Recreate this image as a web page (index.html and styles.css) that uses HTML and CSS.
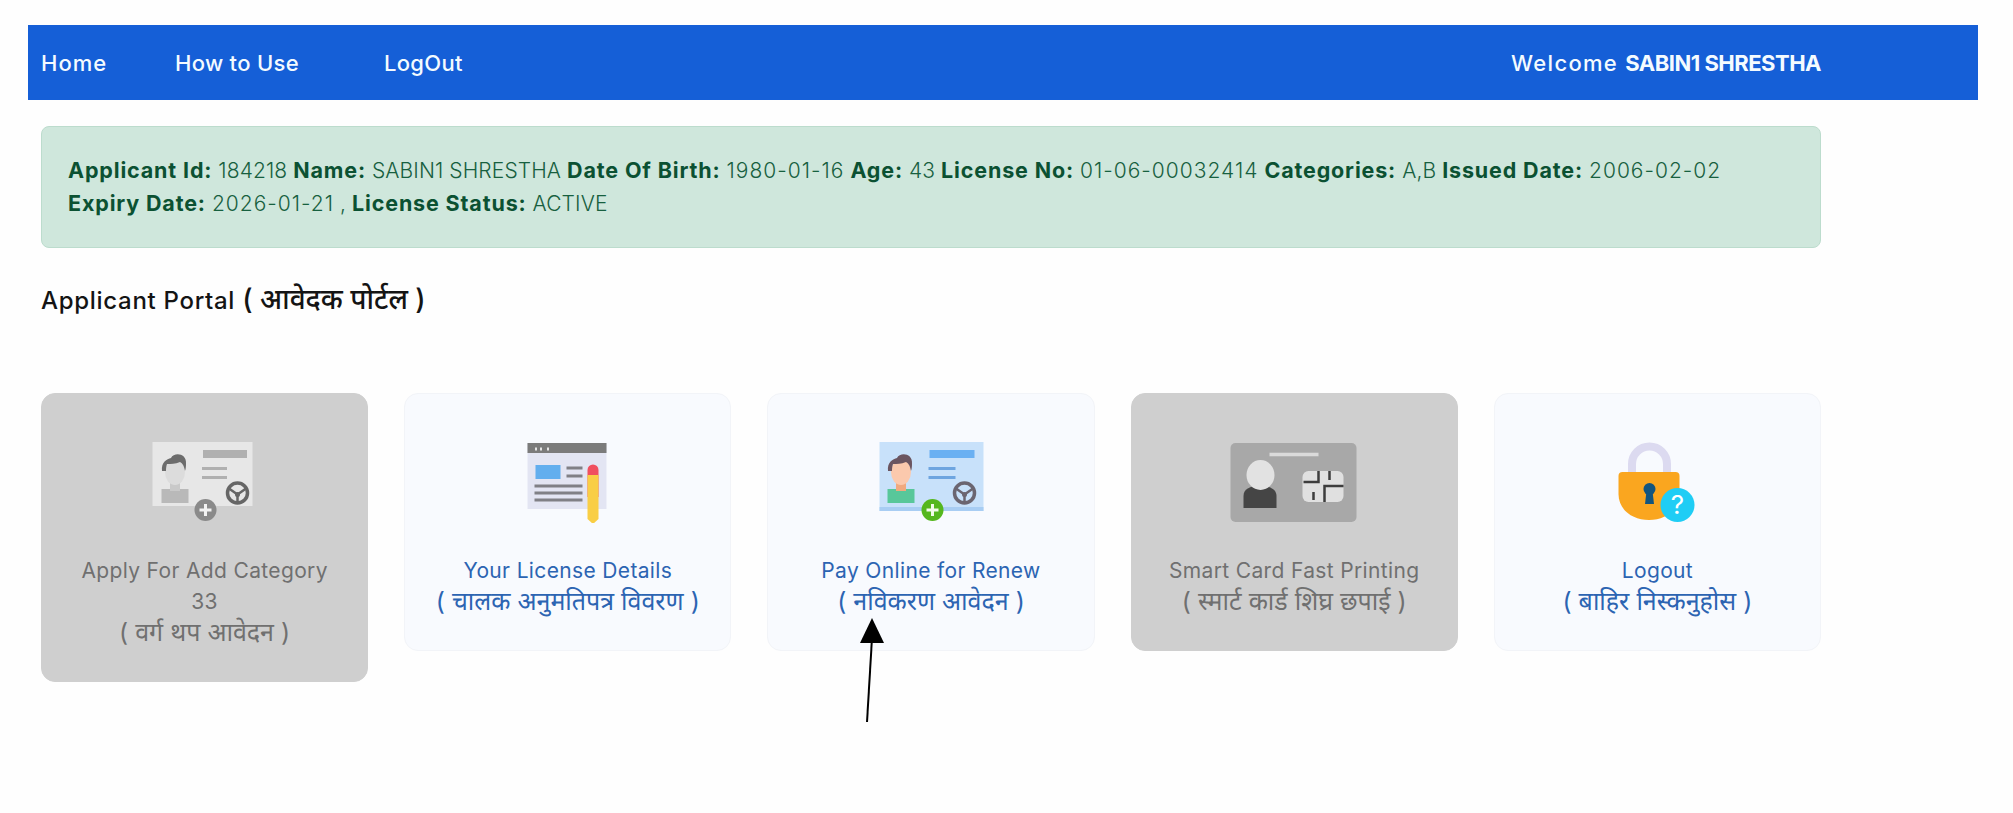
FILE: index.html
```html
<!DOCTYPE html>
<html lang="en">
<head>
<meta charset="utf-8">
<title>Applicant Portal</title>
<link rel="stylesheet" href="styles.css">
</head>
<body>
<div class="page">
  <nav class="nav">
    <div class="nav-links">
      <a class="nav-link nav-home">Home</a>
      <a class="nav-link nav-how">How to Use</a>
      <a class="nav-link">LogOut</a>
    </div>
    <div class="welcome">Welcome <b>SABIN1 SHRESTHA</b></div>
  </nav>
  <main class="content">
    <div class="alert">
      <b>Applicant Id:</b> 184218 <b>Name:</b> SABIN1 SHRESTHA <b>Date Of Birth:</b> <span class="num">1980-01-16</span> <b>Age:</b> 43 <b>License No:</b> <span class="num">01-06-00032414</span> <b>Categories:</b> A,B <b>Issued Date:</b> <span class="num">2006-02-02</span><br>
      <b>Expiry Date:</b> <span class="num">2026-01-21</span> , <b>License Status:</b> ACTIVE
    </div>
    <h1 class="title">Applicant Portal <span class="hi">( आवेदक पोर्टल )</span></h1>
    <div class="cards">
      <a class="card card-off">
        <svg class="icon" viewBox="0 0 130 84" width="130" height="84">
          <g transform="translate(10 0)">
            <rect x="2.500" y="3" width="100" height="64" fill="#e7e7e7"/>
            <rect x="53" y="11" width="44" height="8" fill="#b0b0b0"/>
            <path d="M52 29.500h25M52 38.500h25" stroke="#b0b0b0" stroke-width="3"/>
            <rect x="11.500" y="50" width="27" height="14" fill="#b9b9b9"/>
            <rect x="20" y="40" width="10" height="12" fill="#c9c9c9"/>
            <ellipse cx="25" cy="33" rx="10" ry="13" fill="#dcdcdc"/>
            <path d="M12 32c-1-9 5-12 9-13 3-6 16-5 15 6 0 5-1 7-1 7-1-6-3-8-5-9-5 2-9 2-13 2-1 3-1 5-1 7z" fill="#6c6c6c"/>
            <circle cx="87.500" cy="54" r="10" fill="none" stroke="#666" stroke-width="3.500"/>
            <path d="M79 49.500l8.500 6 8.500-6M87.500 55v8" fill="none" stroke="#666" stroke-width="2.500"/>
            <circle cx="87.500" cy="55.500" r="2.500" fill="#666"/>
            <circle cx="55.500" cy="71" r="11" fill="#8a8a8a"/>
            <path d="M55.500 65v12M49.500 71h12" stroke="#f2f2f2" stroke-width="3"/>
          </g>
        </svg>
        <span class="label">Apply For Add Category</span>
        <span class="label">33</span>
        <span class="label hi">( वर्ग थप आवेदन )</span>
      </a>
      <a class="card">
        <svg class="icon" viewBox="0 0 130 84" width="130" height="84">
          <g transform="translate(10 0)">
            <rect x="14.500" y="4" width="79" height="66" fill="#e3e5f3"/>
            <rect x="14.500" y="4" width="79" height="10" fill="#7b7b7b"/>
            <path d="M22 10h2M27 10h2M34 10h2" stroke="#e6e6e6" stroke-width="3"/>
            <rect x="22.500" y="26" width="25" height="14" fill="#62aeee"/>
            <path d="M53.500 29h16M53.500 37h16M21.500 47h48M21.500 54h48M21.500 61h48" stroke="#808086" stroke-width="3"/>
            <path d="M74.500 58v-27a5.500 5.500 0 0 1 11 0v27z" fill="#f04f5f"/>
            <path d="M74.500 36h11v44l-5.500 5-5.500-5z" fill="#f9ce45"/>
          </g>
        </svg>
        <span class="label">Your License Details</span>
        <span class="label hi">( चालक अनुमतिपत्र विवरण )</span>
      </a>
      <a class="card">
        <svg class="icon" viewBox="0 0 130 84" width="130" height="84">
          <g transform="translate(10 0)">
            <rect x="3.500" y="3" width="104" height="69" fill="#c8e1fa"/>
            <rect x="3.500" y="68" width="104" height="4" fill="#a8cdf3"/>
            <rect x="53.500" y="11" width="45" height="8" fill="#6ab0f2"/>
            <path d="M52.500 29.500h27M52.500 38.500h27" stroke="#6ea5e0" stroke-width="3"/>
            <rect x="11.500" y="50" width="27" height="14" fill="#58c79a"/>
            <rect x="20" y="40" width="10" height="12" fill="#f0a97f"/>
            <ellipse cx="25" cy="33" rx="10" ry="13" fill="#fbc9ad"/>
            <path d="M12 32c-1-9 5-12 9-13 3-6 16-5 15 6 0 5-1 7-1 7-1-6-3-8-5-9-5 2-9 2-13 2-1 3-1 5-1 7z" fill="#6b5560"/>
            <circle cx="88.500" cy="54" r="10" fill="none" stroke="#6b6570" stroke-width="3.500"/>
            <path d="M80 49.500l8.500 6 8.500-6M88.500 55v8" fill="none" stroke="#6b6570" stroke-width="2.500"/>
            <circle cx="88.500" cy="55.500" r="2.500" fill="#6b6570"/>
            <circle cx="56.500" cy="71" r="11" fill="#55b71e"/>
            <path d="M56.500 65v12M50.500 71h12" stroke="#f2fbe9" stroke-width="3"/>
          </g>
        </svg>
        <span class="label">Pay Online for Renew</span>
        <span class="label hi">( नविकरण आवेदन )</span>
      </a>
      <a class="card card-off">
        <svg class="icon" viewBox="0 0 130 84" width="130" height="84">
          <rect x="1.500" y="4" width="126" height="79" rx="5" fill="#a8a8a8"/>
          <path d="M40.500 15.500h49" stroke="#dadada" stroke-width="3.500"/>
          <path d="M14.500 69v-12c0-7 6-10 16.500-10s16.500 3 16.500 10v12z" fill="#454545"/>
          <ellipse cx="31.500" cy="36" rx="14" ry="15" fill="#e2e2e2"/>
          <rect x="73.500" y="32" width="41" height="31" rx="6" fill="#e0e0e0"/>
          <path d="M74.500 43h15v-11M100.500 32v9M114.500 47h-19v16M84.500 53v8" fill="none" stroke="#3d3d3d" stroke-width="2.500"/>
        </svg>
        <span class="label">Smart Card Fast Printing</span>
        <span class="label hi">( स्मार्ट कार्ड शिघ्र छपाई )</span>
      </a>
      <a class="card">
        <svg class="icon" viewBox="0 0 130 84" width="130" height="84">
          <path d="M40 36V25a17.500 17.500 0 0 1 35 0v11" fill="none" stroke="#dcdaf0" stroke-width="8"/>
          <path d="M30.500 33h53a4 4 0 0 1 4 4v18c0 16-14 26-30.500 26s-30.500-10-30.500-26v-18a4 4 0 0 1 4-4z" fill="#faa61f"/>
          <circle cx="57.500" cy="50" r="6" fill="#12557f"/>
          <path d="M54.500 52h6l1.500 13h-9z" fill="#12557f"/>
          <circle cx="85.500" cy="66" r="17" fill="#1fcdf5"/>
          <text x="85.500" y="75" class="icon-q">?</text>
        </svg>
        <span class="label">Logout</span>
        <span class="label hi">( बाहिर निस्कनुहोस )</span>
      </a>
    </div>
  </main>
  <svg class="arrow" viewBox="0 0 40 110" width="40" height="110">
    <path d="M20 0l12 25H8z" fill="#000"/>
    <path d="M20 20L15 104" stroke="#000" stroke-width="2"/>
  </svg>
</div>
</body>
</html>
```
FILE: styles.css
```css
* { box-sizing: border-box; }
html, body { margin: 0; padding: 0; background: #fefefe; }
body {
  font-family: Inter, "Noto Sans", "Noto Sans Devanagari", "Lohit Devanagari", sans-serif;
  height: 813px;
  overflow: hidden;
}
.page {
  position: relative;
  width: 1950px;
  margin: 25px 0 0 28px;
}
.nav {
  display: flex;
  justify-content: space-between;
  align-items: center;
  height: 75px;
  padding: 0 157px 0 13px;
  background: #155fd7;
  color: #f4fbff;
  font-size: 22px;
  font-weight: 500;
  letter-spacing: 0.3px;
}
.nav-links { display: flex; }
.nav-home { width: 134px; letter-spacing: 1px; }
.nav-how { width: 209px; }
.welcome { letter-spacing: 1.3px; }
.welcome b { font-weight: 700; letter-spacing: -0.5px; }
.content { padding: 26px 157px 0 13px; }
.alert {
  height: 122px;
  padding: 27px 26px;
  background: #cfe7dc;
  border: 1px solid #bcdccd;
  border-radius: 8px;
  color: #17603f;
  font-size: 21px;
  font-weight: 300;
  line-height: 33px;
  letter-spacing: 0.1px;
  white-space: nowrap;
}
.alert b { font-size: 21.5px; font-weight: 700; color: #0b5132; letter-spacing: 0.85px; }
.alert .num { letter-spacing: 1px; }
.title {
  margin: 35px 0 0;
  height: 53px;
  font-size: 24px;
  font-weight: 500;
  line-height: 32px;
  letter-spacing: 0.7px;
  color: #141414;
}
.title .hi { font-size: 28px; letter-spacing: 0; }
.cards {
  display: grid;
  grid-template-columns: repeat(5, 1fr);
  gap: 36px;
  align-items: start;
  margin-top: 57px;
}
.card {
  display: flex;
  flex-direction: column;
  align-items: center;
  padding: 45px 0 33px;
  background: #f8fafe;
  border: 1px solid #f2f4f8;
  border-radius: 14px;
  color: #2c64b2;
  font-size: 21px;
  line-height: 31px;
  letter-spacing: 0.35px;
}
.card-off {
  background: #cfcfcf;
  border-color: #cfcfcf;
  color: #707070;
}
.label.hi { font-size: 25px; letter-spacing: 0; }
.icon { margin-bottom: 32px; display: block; }
.icon-q {
  fill: #fff;
  font-size: 26px;
  font-weight: 400;
  text-anchor: middle;
}
.arrow {
  position: absolute;
  left: 824px;
  top: 593px;
}
```
